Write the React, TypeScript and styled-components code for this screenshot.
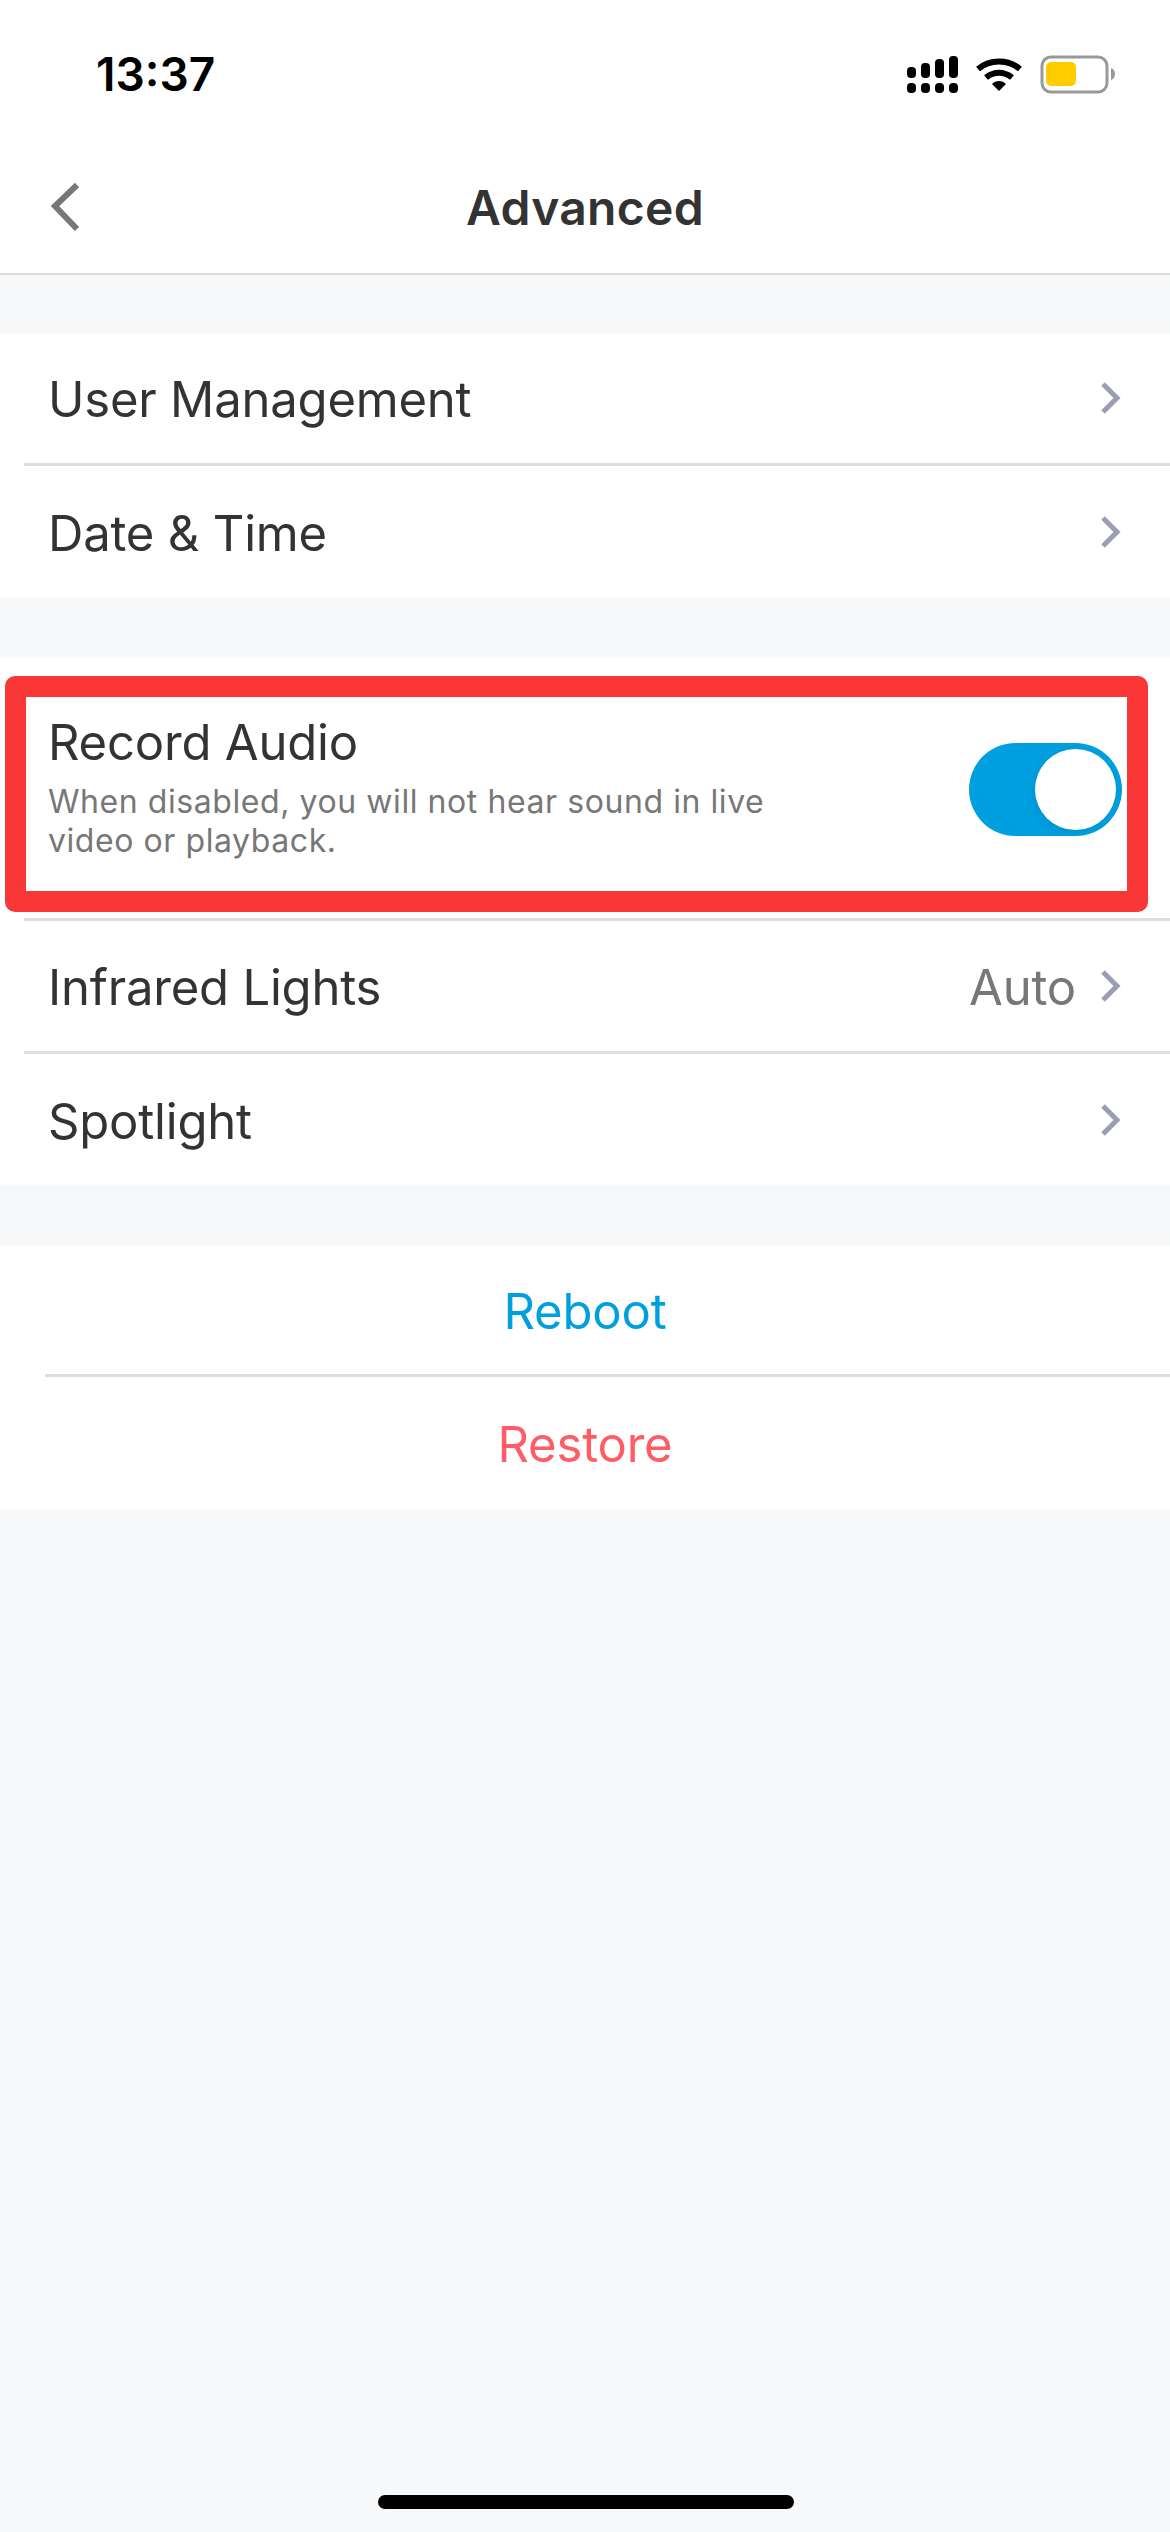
import React from "react";
import styled, { createGlobalStyle } from "styled-components";

const Global = createGlobalStyle`
  html, body { margin: 0; padding: 0; background: #f7f8fa; }
  body { font-family: Inter, "Liberation Sans", sans-serif; }
`;

const Page = styled.div`
  width: 1170px;
  height: 2532px;
  position: relative;
  overflow: hidden;
  background: #f7f8fa;
  display: flex;
  flex-direction: column;
`;

const TopBar = styled.header`
  background: #fff;
  height: 273px;
  flex: none;
  border-bottom: 2px solid #dcdcdc;
  display: flex;
  flex-direction: column;
`;

const StatusBar = styled.div`
  height: 144px;
  padding: 0 30px 0 96px;
  display: flex;
  justify-content: space-between;
  align-items: flex-start;
`;

const Clock = styled.div`
  margin-top: 46px;
  font-size: 46px;
  line-height: 56px;
  font-weight: 600;
  color: #000;
`;

const StatusIcons = styled.svg`
  margin-top: 50px;
  width: 280px;
  height: 50px;
`;

const NavBar = styled.div`
  flex: 1;
  display: flex;
  align-items: center;
  justify-content: center;
  position: relative;
`;

const BackIcon = styled.svg`
  position: absolute;
  left: 50px;
  top: 37px;
  width: 32px;
  height: 52px;
`;

const Title = styled.h1`
  margin: 0;
  font-size: 48px;
  line-height: 60px;
  font-weight: 600;
  letter-spacing: 0.3px;
  color: #333;
  position: relative;
  top: -1px;
`;

const Group = styled.section<{ $gap: number }>`
  margin-top: ${(p) => p.$gap}px;
  background: #fff;
  flex: none;
  display: flex;
  flex-direction: column;
`;

const Row = styled.div<{ $h: number }>`
  height: ${(p) => p.$h}px;
  padding: 0 48px;
  display: flex;
  align-items: center;
  justify-content: space-between;
`;

const Divider = styled.div<{ $inset?: number }>`
  height: 3px;
  margin-left: ${(p) => p.$inset ?? 24}px;
  background: #dedede;
`;

const Label = styled.span`
  padding-top: 4px;
  font-size: 49px;
  line-height: 60px;
  letter-spacing: -0.2px;
  color: #333;
`;

const RightSide = styled.div`
  display: flex;
  align-items: center;
  gap: 24px;
`;

const Value = styled.span`
  padding-top: 4px;
  font-size: 49px;
  line-height: 60px;
  letter-spacing: -0.2px;
  color: #777;
`;

const Chevron = styled.svg`
  width: 22px;
  height: 36px;
`;

const TextCol = styled.div`
  display: flex;
  flex-direction: column;
  width: 760px;
  margin-bottom: 3px;
`;

const RowTitle = styled.span`
  font-size: 49px;
  line-height: 60px;
  letter-spacing: -0.2px;
  color: #333;
`;

const Hint = styled.p`
  margin: 9px 0 0;
  font-size: 32px;
  line-height: 39px;
  letter-spacing: 0.57px;
  color: #777;
`;

const Toggle = styled.div`
  width: 153px;
  height: 93px;
  margin-top: 4px;
  border-radius: 47px;
  background: #009fe0;
  display: flex;
  align-items: center;
  justify-content: flex-end;
  padding-right: 6px;
  box-sizing: border-box;
  flex: none;
`;

const Knob = styled.div`
  width: 81px;
  height: 81px;
  border-radius: 50%;
  background: #fff;
  box-shadow: -2px 3px 8px rgba(0, 0, 0, 0.08);
`;

const ActionRow = styled.div<{ $color: string; $h: number }>`
  height: ${(p) => p.$h}px;
  display: flex;
  align-items: center;
  justify-content: center;
  padding-top: 4px;
  box-sizing: border-box;
  font-size: 49px;
  line-height: 60px;
  letter-spacing: -0.2px;
  color: ${(p) => p.$color};
`;

const Highlight = styled.div`
  position: absolute;
  left: 5px;
  top: 676px;
  width: 1143px;
  height: 236px;
  box-sizing: border-box;
  border: 21px solid #f93737;
  border-radius: 10px;
  pointer-events: none;
`;

const HomeBar = styled.div`
  position: absolute;
  left: 378px;
  bottom: 23px;
  width: 416px;
  height: 14px;
  border-radius: 7px;
  background: #000;
`;

const Arrow = () => (
  <Chevron viewBox="0 0 22 36">
    <path d="M3 4l14 14L3 32" fill="none" stroke="#9b9eb2" strokeWidth="5" />
  </Chevron>
);

export default function App() {
  return (
    <Page>
      <Global />
      <TopBar>
        <StatusBar>
          <Clock>13:37</Clock>
          <StatusIcons viewBox="860 50 280 50">
            <g fill="#000">
              <rect x="907" y="67" width="9" height="11" rx="4" />
              <rect x="921" y="63" width="9" height="15" rx="4" />
              <rect x="935" y="59" width="9" height="19" rx="4" />
              <rect x="949" y="56" width="9" height="22" rx="4" />
              <rect x="907" y="83" width="9" height="10" rx="4" />
              <rect x="921" y="83" width="9" height="10" rx="4" />
              <rect x="935" y="83" width="9" height="10" rx="4" />
              <rect x="949" y="83" width="9" height="10" rx="4" />
              <path d="M999 91l-7-7c4-4 10-4 14 0z" />
              <path d="M978 69c12-10 30-10 42 0" fill="none" stroke="#000" strokeWidth="6" />
              <path d="M986 77.500c8-6.500 18-6.500 26 0" fill="none" stroke="#000" strokeWidth="6" />
            </g>
            <rect x="1042" y="57" width="65" height="35" rx="9" fill="none" stroke="#999" strokeWidth="3" />
            <rect x="1046" y="62" width="30" height="24" rx="5" fill="#ffcc00" />
            <path d="M1111 68c3 1 4 4 4 6s-1 5-4 6z" fill="#999" />
          </StatusIcons>
        </StatusBar>
        <NavBar>
          <BackIcon viewBox="0 0 32 52">
            <path d="M27 4L5 25l22 23" fill="none" stroke="#777" strokeWidth="6" />
          </BackIcon>
          <Title>Advanced</Title>
        </NavBar>
      </TopBar>

      <Group $gap={58}>
        <Row $h={130}>
          <Label>User Management</Label>
          <Arrow />
        </Row>
        <Divider />
        <Row $h={131}>
          <Label>Date &amp; Time</Label>
          <Arrow />
        </Row>
      </Group>

      <Group $gap={60}>
        <Row $h={261}>
          <TextCol>
            <RowTitle>Record Audio</RowTitle>
            <Hint>When disabled, you will not hear sound in live video or playback.</Hint>
          </TextCol>
          <Toggle>
            <Knob />
          </Toggle>
        </Row>
        <Divider />
        <Row $h={130}>
          <Label>Infrared Lights</Label>
          <RightSide>
            <Value>Auto</Value>
            <Arrow />
          </RightSide>
        </Row>
        <Divider />
        <Row $h={131}>
          <Label>Spotlight</Label>
          <Arrow />
        </Row>
      </Group>

      <Group $gap={60}>
        <ActionRow $h={129} $color="#009fe0">Reboot</ActionRow>
        <Divider $inset={45} />
        <ActionRow $h={132} $color="#ff5c66">Restore</ActionRow>
      </Group>

      <Highlight />
      <HomeBar />
    </Page>
  );
}
